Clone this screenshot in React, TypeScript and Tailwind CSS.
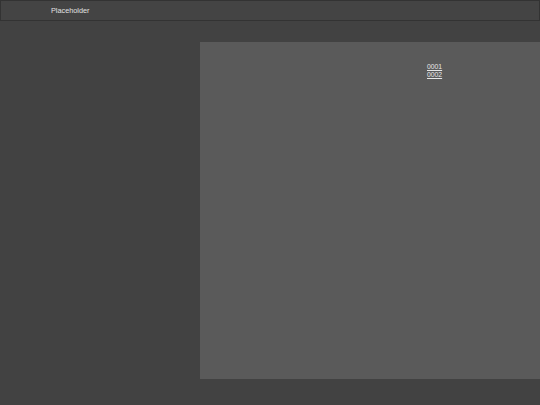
export default function App() {
  return (
    <div className="w-[540px] h-[405px] bg-[#424242] flex flex-col overflow-hidden" style={{ fontFamily: '"Liberation Sans", Arial, sans-serif' }}>
      <div className="h-[21px] shrink-0 bg-[#444444] border border-[#333333] flex items-center pl-[50px]">
        <span className="text-[7.3px] text-[#e0e0e0] leading-none">Placeholder</span>
      </div>
      <div className="flex-1 flex pt-[21px] pb-[26px] pl-[200px]">
        <div className="flex-1 bg-[#5a5a5a] pl-[227px] pt-[21px]">
          <div className="flex flex-col text-[6.8px] leading-[7.5px] text-[#e6e6e6]">
            <a href="#" className="underline">0001</a>
            <a href="#" className="underline">0002</a>
          </div>
        </div>
      </div>
    </div>
  );
}
